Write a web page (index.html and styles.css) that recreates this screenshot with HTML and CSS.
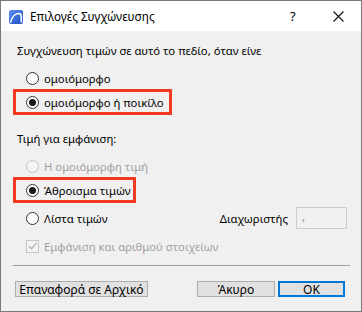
FILE: index.html
```html
<!DOCTYPE html>
<html>
<head>
<meta charset="utf-8">
<link rel="stylesheet" href="styles.css">
</head>
<body>
<div class="window">
  <div class="titlebar">
    <svg class="appicon" width="14" height="14" viewBox="0 0 14 14">
      <defs>
        <linearGradient id="g" x1="0" y1="0" x2="1" y2="1">
          <stop offset="0" stop-color="#5c8ff0"/>
          <stop offset="1" stop-color="#1d4fc4"/>
        </linearGradient>
      </defs>
      <rect x="0" y="0" width="14" height="14" rx="2" fill="url(#g)"/>
      <path d="M1.5 12.5 C3 6 7 3.5 10 3.5 C11.8 3.5 12.3 5 12.3 7 L12.3 12.5" fill="none" stroke="#fff" stroke-width="1.6"/>
    </svg>
    <span class="title">Επιλογές Συγχώνευσης</span>
    <span class="help">?</span>
    <svg class="close" width="11" height="11" viewBox="0 0 11 11"><path d="M0.5 0.5 L10.5 10.5 M10.5 0.5 L0.5 10.5" stroke="#111" stroke-width="1.1"/></svg>
  </div>
  <div class="content">
    <div class="row text first">Συγχώνευση τιμών σε αυτό το πεδίο, όταν είνε</div>
    <div class="row opt g1"><span class="radio"></span>ομοιόμορφο</div>
    <div class="hl hl1"><div class="row opt"><span class="radio on"></span>ομοιόμορφο ή ποικίλο</div></div>
    <div class="row text label2">Τιμή για εμφάνιση:</div>
    <div class="row opt dis g2"><span class="radio"></span>Η ομοιόμορφη τιμή</div>
    <div class="hl hl2"><div class="row opt"><span class="radio on"></span>Άθροισμα τιμών</div></div>
    <div class="row opt listrow">
      <span class="radio"></span><span class="grow">Λίστα τιμών</span>
      <span class="seplabel">Διαχωριστής</span><span class="field">,</span>
    </div>
    <div class="row opt dis chkrow">
      <span class="check"><svg width="12" height="12" viewBox="0 0 12 12"><path d="M2 6 L5 9 L10.5 2.5" fill="none" stroke="#b0b0b0" stroke-width="1.3"/></svg></span>Εμφάνιση και αριθμού στοιχείων
    </div>
    <div class="separator"></div>
    <div class="buttons">
      <span class="btn reset">Επαναφορά σε Αρχικό</span>
      <span class="spacer"></span>
      <span class="btn cancel">Άκυρο</span>
      <span class="btn ok">OK</span>
    </div>
  </div>
</div>
</body>
</html>
```
FILE: styles.css
```css
* { box-sizing: border-box; }
html, body { margin: 0; padding: 0; }
body {
  font-family: "Noto Sans", "Liberation Sans", sans-serif;
  font-size: 11.3px;
  color: #000;
}
.window {
  width: 362px;
  height: 312px;
  border: 1px solid #7a7a7a;
  background: #f0f0f0;
  display: flex;
  flex-direction: column;
}
.titlebar {
  height: 30px;
  background: #fff;
  display: flex;
  align-items: center;
  padding-left: 8px;
  flex: none;
}
.appicon { flex: none; margin-top: 1px; }
.title { margin-left: 7px; font-size: 11.7px; flex: 1; }
.help { font-size: 13px; width: 14px; margin-right: 29px; }
.close { margin-right: 17px; }
.content {
  padding: 0 0 0 12px;
  display: flex;
  flex-direction: column;
}
.row {
  height: 18px;
  display: flex;
  align-items: center;
  white-space: nowrap;
}
.text { padding-left: 4px; }
.first { margin-top: 10px; }
.opt { padding-left: 13px; }
.g1 { margin-top: 10px; }
.radio {
  width: 13px;
  height: 13px;
  border: 1px solid #333;
  border-radius: 50%;
  background: #fff;
  margin-right: 5px;
  flex: none;
  display: flex;
  align-items: center;
  justify-content: center;
}
.radio.on::after {
  content: "";
  width: 7px;
  height: 7px;
  border-radius: 50%;
  background: #1a1a1a;
}
.hl {
  border: 3px solid #f03a22;
  height: 26px;
  margin-top: 2px;
  padding-top: 1px;
  margin-left: 0;
}
.hl .opt { padding-left: 10px; }
.hl1 { width: 159px; }
.hl2 { width: 123px; }
.label2 { margin-top: 14px; }
.dis { color: #a0a0a0; }
.dis .radio { border-color: #c4c4c4; background: #f4f4f4; }
.g2 { margin-top: 10px; }
.listrow { height: 22px; margin-top: 4px; }
.grow { flex: 1; }
.seplabel { margin-right: 8px; }
.field {
  width: 51px;
  height: 22px;
  border: 1px solid #cccccc;
  background: #f0f0f0;
  color: #8a8a8a;
  padding-left: 5px;
  line-height: 18px;
  margin-right: 14px;
}
.chkrow { margin-top: 8px; }
.check {
  width: 13px;
  height: 13px;
  border: 1px solid #c4c4c4;
  background: #f4f4f4;
  margin-right: 5px;
  display: flex;
  align-items: center;
  justify-content: center;
  flex: none;
}
.separator {
  height: 1px;
  background: #a0a0a0;
  margin-top: 10px;
  margin-right: 11px;
}
.buttons {
  display: flex;
  margin-top: 15px;
  padding-left: 2px;
}
.btn {
  height: 16px;
  border: 1px solid #adadad;
  background: #e1e1e1;
  display: flex;
  align-items: center;
  justify-content: center;
  font-size: 12px;
}
.reset { width: 133px; }
.spacer { flex: 1; }
.cancel { width: 78px; margin-right: 3px; }
.ok { width: 67px; border: 2px solid #0078d7; margin-right: 16px; }
```
